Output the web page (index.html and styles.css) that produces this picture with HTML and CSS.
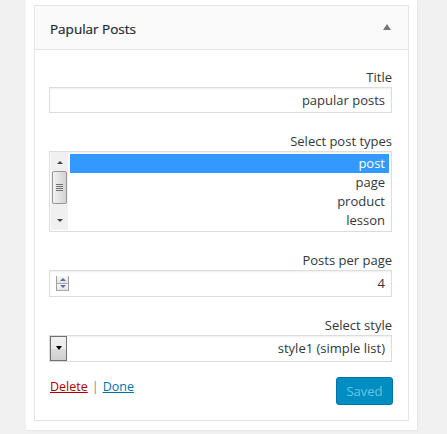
FILE: index.html
```
<!DOCTYPE html>
<html lang="en">
<head>
<meta charset="utf-8">
<title>Papular Posts widget</title>
<link rel="stylesheet" href="styles.css">
</head>
<body>
<div class="sidebar">
  <div class="widget">
    <div class="widget-top">
      <h3 class="widget-title">Papular Posts</h3>
      <span class="toggle" aria-hidden="true"></span>
    </div>
    <div class="widget-inside">
      <div class="field">
        <label class="label">Title</label>
        <div class="input text-input">papular posts</div>
      </div>
      <div class="field">
        <label class="label">Select post types</label>
        <div class="input listbox">
          <div class="scrollbar">
            <span class="sb-arrow sb-up"></span>
            <span class="sb-thumb"><i></i><i></i><i></i><i></i></span>
            <span class="sb-arrow sb-down"></span>
          </div>
          <ul class="options">
            <li class="selected">post</li>
            <li>page</li>
            <li>product</li>
            <li>lesson</li>
          </ul>
        </div>
      </div>
      <div class="field">
        <label class="label">Posts per page</label>
        <div class="input number-input">
          <span class="spinner"><span class="spin spin-up"></span><span class="spin spin-down"></span></span>
          <span class="value">4</span>
        </div>
      </div>
      <div class="field">
        <label class="label">Select style</label>
        <div class="input select-input">
          <span class="drop-btn"></span>
          <span class="value">style1 (simple list)</span>
        </div>
      </div>
      <div class="actions">
        <div class="links"><a class="delete" href="#">Delete</a><span class="sep">|</span><a class="done" href="#">Done</a></div>
        <button class="saved" type="button">Saved</button>
      </div>
    </div>
  </div>
</div>
</body>
</html>
```
FILE: styles.css
```
html, body {
  margin: 0;
  padding: 0;
}
body {
  background: #f1f1f1;
  font-family: "Open Sans", "Noto Sans", sans-serif;
  font-size: 13px;
  color: #32373c;
  width: 447px;
  height: 434px;
}
.sidebar {
  margin-left: 26px;
  width: 391px;
  background: #fff;
  padding: 5px 8px 9px;
  box-sizing: border-box;
  box-shadow: 1px 1px 1px rgba(0,0,0,0.04);
}
.widget {
  border: 1px solid #e5e5e5;
  background: #fff;
}
.widget-top {
  height: 43px;
  background: #fafafa;
  border-bottom: 1px solid #e5e5e5;
  display: flex;
  align-items: center;
  justify-content: space-between;
  padding: 0 17px 0 15px;
}
.widget-title {
  margin: 0;
  font-size: 13.5px;
  font-weight: 500;
  color: #23282d;
  line-height: 18px;
  padding-top: 2px;
  -webkit-text-stroke: 0.2px #23282d;
}
.toggle {
  width: 0;
  height: 0;
  border-left: 4.5px solid transparent;
  border-right: 4.5px solid transparent;
  border-bottom: 6px solid #72777c;
  margin-top: -1px;
}
.widget-inside {
  padding: 0 16px 15px 14px;
}
.field {
  display: flex;
  flex-direction: column;
  padding-top: 18px;
}
.field + .field {
  padding-top: 19px;
}
.label {
  text-align: right;
  line-height: 18px;
  margin-bottom: 1px;
}
.input {
  border: 1px solid #ddd;
  box-shadow: inset 0 1px 2px rgba(0,0,0,0.07);
  background: #fff;
  box-sizing: border-box;
  color: #32373c;
}
.text-input {
  height: 26px;
  line-height: 24px;
  text-align: right;
  padding: 0 6px;
}
.listbox {
  height: 81px;
  display: flex;
  padding: 1px 2px 1px 1px;
}
.scrollbar {
  width: 17px;
  background: #f0f0f0;
  position: relative;
  flex: none;
}
.sb-arrow {
  position: absolute;
  left: 6px;
  width: 0;
  height: 0;
  border-left: 3px solid transparent;
  border-right: 3px solid transparent;
}
.sb-up {
  top: 8px;
  border-bottom: 3px solid #444;
}
.sb-down {
  bottom: 8px;
  border-top: 3px solid #444;
}
.sb-thumb {
  position: absolute;
  left: 1px;
  top: 18px;
  width: 15px;
  height: 33px;
  box-sizing: border-box;
  border: 1px solid #989898;
  border-radius: 2px;
  background: linear-gradient(to right, #f2f2f2, #e2e2e2 50%, #d2d2d2);
  display: flex;
  flex-direction: column;
  align-items: center;
  justify-content: center;
  gap: 1px;
}
.sb-thumb i {
  display: block;
  width: 7px;
  height: 1px;
  background: #6f6f6f;
}
.options {
  list-style: none;
  margin: 1px 0 0 2px;
  padding: 0;
  flex: 1;
}
.options li {
  height: 19px;
  line-height: 19px;
  text-align: right;
  padding-right: 4px;
}
.options li.selected {
  background: #3399ff;
  color: #fff;
}
.number-input, .select-input {
  height: 27px;
  display: flex;
  align-items: center;
  justify-content: space-between;
  padding: 0 6px 0 0;
}
.number-input .value, .select-input .value {
  line-height: 25px;
}
.spinner {
  margin-left: 6px;
  width: 13px;
  height: 15px;
  display: flex;
  flex-direction: column;
  border-left: 1px solid #a0a0a0;
  border-right: 1px solid #a0a0a0;
  box-sizing: border-box;
}
.spin {
  flex: 1;
  display: flex;
  align-items: center;
  justify-content: center;
  background: linear-gradient(#f8f8f8, #e4e4e4);
  border-bottom: 1px solid #a8a8a8;
}
.spin::after {
  content: "";
  width: 0;
  height: 0;
  border-left: 3px solid transparent;
  border-right: 3px solid transparent;
}
.spin-up::after {
  border-bottom: 3px solid #5a6db0;
}
.spin-down::after {
  border-top: 3px solid #5a6db0;
}
.drop-btn {
  align-self: stretch;
  width: 17px;
  box-sizing: border-box;
  border: 1px solid #707070;
  background: linear-gradient(#f2f2f2, #ebebeb 50%, #dddddd 51%, #cfcfcf);
  display: flex;
  justify-content: center;
  padding-top: 9px;
}
.drop-btn::after {
  content: "";
  width: 0;
  height: 0;
  border-left: 3.5px solid transparent;
  border-right: 3.5px solid transparent;
  border-top: 4px solid #000;
}
.actions {
  display: flex;
  justify-content: space-between;
  align-items: flex-start;
  margin-top: 15px;
}
.links {
  padding-left: 1px;
  line-height: 20px;
  font-size: 12.5px;
}
.links a {
  text-decoration: underline;
}
.delete {
  color: #a00;
}
.done {
  color: #0073aa;
}
.sep {
  color: #82878c;
  margin: 0 4px;
}
.saved {
  width: 57px;
  height: 28px;
  margin-right: -1px;
  border: 1px solid #0073aa;
  border-radius: 3px;
  background: #008ec2;
  color: #66c6e4;
  font-family: inherit;
  font-size: 13px;
  padding: 0;
}
```
